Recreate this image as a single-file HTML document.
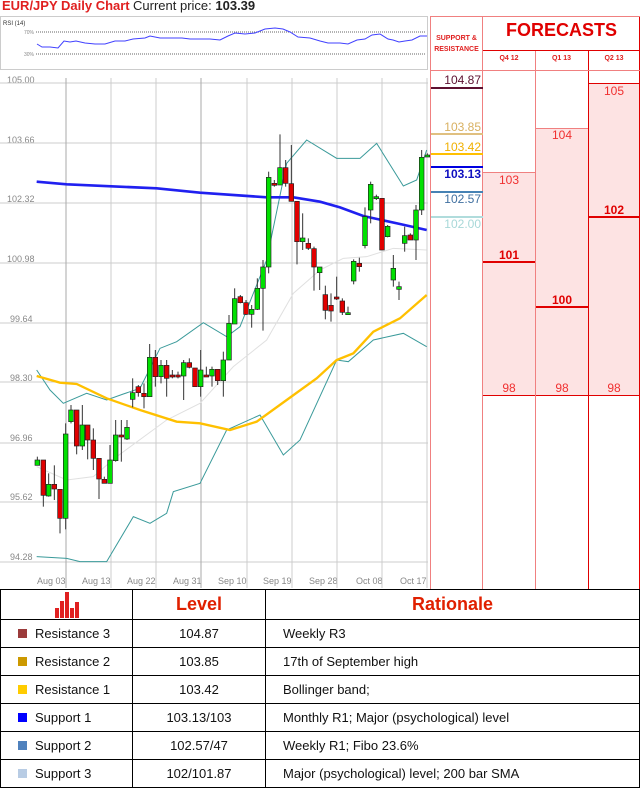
<!DOCTYPE html>
<html><head><meta charset="utf-8"><style>
*{margin:0;padding:0;box-sizing:border-box}
body{width:640px;height:786px;background:#fff;position:relative;overflow:hidden;font-family:"Liberation Sans",sans-serif}
.a{position:absolute}
.lbl{position:absolute;font-size:9px;color:#888;}
.fc{position:absolute;font-size:12px;color:#f03030;text-align:center}
table{position:absolute;left:0;top:589px;width:640px;height:197px;border-collapse:collapse}
td{border:1px solid #000;font-size:13px;color:#111;height:28px}
</style></head><body>
<div class="a" style="left:2px;top:-2px;font-size:13px;font-weight:bold;color:#e02020">EUR/JPY Daily Chart</div>
<div class="a" style="left:133px;top:-2px;font-size:13px;color:#222">Current price: <b>103.39</b></div>
<!-- RSI -->
<div class="a" style="left:0;top:16px;width:428px;height:54px;border:1px solid #ccc"></div>
<div class="a" style="left:3px;top:21px;font-size:6px;color:#333">RSI (14)</div>
<div class="a" style="left:24px;top:30px;font-size:5px;color:#888">70%</div>
<div class="a" style="left:24px;top:52px;font-size:5px;color:#888">30%</div>
<svg class="a" style="left:0;top:16px" width="428" height="54">
<line x1="36" y1="16" x2="425" y2="16" stroke="#666" stroke-dasharray="1,1"/>
<line x1="36" y1="38" x2="425" y2="38" stroke="#666" stroke-dasharray="1,1"/>
<polyline fill="none" stroke="#4040ff" stroke-width="1" points="37,28 42,31 50,31 58,32 64,25 70,26 76,25 85,27 95,28 105,28 115,25 125,25 133,23 145,22 150,20 160,22 172,22 182,22 190,23 200,23 210,23 220,24 228,20 235,17 245,18 255,17 265,13 275,12 283,13 290,16 298,21 310,22 320,25 328,27 340,27 348,28 357,24 365,23 372,19 380,18 388,23 393,24 399,26 405,25 412,24 420,20 427,20"/>
</svg>
<!-- Price axis labels -->
<div class="lbl" style="left:7px;top:75px">105.00</div>
<div class="lbl" style="left:7px;top:135px">103.66</div>
<div class="lbl" style="left:7px;top:194px">102.32</div>
<div class="lbl" style="left:7px;top:254px">100.98</div>
<div class="lbl" style="left:10px;top:314px">99.64</div>
<div class="lbl" style="left:10px;top:373px">98.30</div>
<div class="lbl" style="left:10px;top:433px">96.96</div>
<div class="lbl" style="left:10px;top:492px">95.62</div>
<div class="lbl" style="left:10px;top:552px">94.28</div>
<!-- dates -->
<div class="lbl" style="left:37px;top:576px">Aug 03</div>
<div class="lbl" style="left:82px;top:576px">Aug 13</div>
<div class="lbl" style="left:127px;top:576px">Aug 22</div>
<div class="lbl" style="left:173px;top:576px">Aug 31</div>
<div class="lbl" style="left:218px;top:576px">Sep 10</div>
<div class="lbl" style="left:263px;top:576px">Sep 19</div>
<div class="lbl" style="left:309px;top:576px">Sep 28</div>
<div class="lbl" style="left:356px;top:576px">Oct 08</div>
<div class="lbl" style="left:400px;top:576px">Oct 17</div>
<svg class="a" style="left:0;top:70px" width="430" height="520">
<g stroke="#ccc" stroke-width="1">
<line x1="0" y1="13" x2="428" y2="13"/><line x1="0" y1="73" x2="428" y2="73"/><line x1="0" y1="133" x2="428" y2="133"/><line x1="0" y1="193" x2="428" y2="193"/><line x1="0" y1="253" x2="428" y2="253"/><line x1="0" y1="312" x2="428" y2="312"/><line x1="0" y1="373" x2="428" y2="373"/><line x1="0" y1="432" x2="428" y2="432"/><line x1="0" y1="492" x2="428" y2="492"/>
<line x1="66" y1="8" x2="66" y2="518" stroke="#aaa"/><line x1="111" y1="8" x2="111" y2="518"/><line x1="156" y1="8" x2="156" y2="518"/><line x1="201" y1="8" x2="201" y2="518" stroke="#aaa"/><line x1="247" y1="8" x2="247" y2="518"/><line x1="292" y1="8" x2="292" y2="518"/><line x1="337" y1="8" x2="337" y2="518"/><line x1="382" y1="8" x2="382" y2="518"/><line x1="427" y1="8" x2="427" y2="518"/>
</g></svg>
<svg class="a" id="ch" style="left:0;top:120px" width="430" height="460" viewBox="0 0 1290 1380">
<polyline fill="none" stroke="#e0e0e0" stroke-width="3" points="110,1040 200,1080 280,1070 350,1010 500,900 600,850 700,740 800,660 880,520 960,450 1030,415 1100,410 1180,385 1280,390"/>
<polyline fill="none" stroke="#3a9a9a" stroke-width="3" points="110,750 150,810 190,850 260,820 320,840 370,822 420,805 480,685 530,665 610,608 680,650 720,620 800,420 860,130 920,60 1010,115 1080,115 1130,70 1210,198 1250,180 1280,90"/>
<polyline fill="none" stroke="#3a9a9a" stroke-width="3" points="110,1310 200,1315 240,1325 320,1325 400,1190 450,1210 500,1180 520,1115 600,1090 680,930 780,885 850,1005 900,960 1010,720 1045,725 1120,660 1210,640 1280,680"/>
<polyline fill="none" stroke="#ffc000" stroke-width="7" points="110,768 180,788 230,792 320,835 420,870 530,905 600,910 690,930 770,905 860,840 950,775 1010,720 1060,700 1120,635 1200,595 1280,525"/>
<polyline fill="none" stroke="#2020f0" stroke-width="8" points="110,185 200,193 470,205 600,218 800,232 880,232 960,245 1020,262 1090,288 1200,312 1280,330"/>
<g id="cd"></g>
</svg>
<script>
var d=[[112,1020,1036,1010,1036,1],[130,1020,1126,1020,1160,0],[146,1093,1128,1060,1130,1],[163,1093,1107,1036,1140,0],[180,1108,1195,1108,1240,0],[197,942,1195,910,1228,1],[213,870,905,855,910,1],[230,870,978,870,1003,0],[247,915,978,855,990,1],[263,915,960,915,1018,0],[280,960,1015,925,1050,0],[297,1015,1077,1015,1137,0],[313,1078,1090,1070,1090,0],[330,1020,1090,975,1090,1],[347,945,1022,900,1025,1],[364,945,950,900,1025,0],[381,922,957,900,960,1],[398,818,838,775,862,1],[415,800,818,795,830,0],[432,820,830,790,865,0],[449,712,830,672,830,1],[466,712,770,690,800,0],[483,736,770,720,790,1],[500,736,775,720,830,0],[517,765,767,750,775,0],[534,765,767,755,775,0],[551,728,768,720,840,1],[568,728,742,715,745,0],[585,744,800,744,800,0],[602,750,800,690,830,1],[619,765,768,740,770,0],[636,748,768,740,800,1],[653,748,782,748,795,0],[670,720,782,695,830,1],[687,610,720,585,720,1],[704,536,612,505,612,1],[721,530,548,525,550,0],[738,548,583,540,585,0],[755,568,583,555,623,1],[772,505,568,475,570,1],[789,441,505,420,632,1],[806,172,441,155,460,1],[823,190,195,180,200,0],[840,143,195,43,195,1],[857,143,190,120,200,0],[874,191,244,75,244,0],[891,244,365,244,433,0],[908,354,365,280,390,1],[925,370,385,355,390,0],[942,386,441,380,512,0],[959,441,458,441,510,1],[976,524,571,497,598,0],[993,556,573,520,605,0],[1010,531,535,470,540,0],[1027,543,577,535,585,0],[1044,578,582,560,585,1],[1061,424,483,418,493,1],[1078,430,440,413,455,0],[1095,290,377,262,385,1],[1112,193,270,185,310,1],[1129,230,236,224,240,1],[1146,235,390,235,390,0],[1163,319,350,315,352,1],[1180,445,480,405,500,1],[1197,500,508,485,540,1],[1214,347,370,320,395,1],[1231,345,360,340,360,0],[1248,270,360,255,420,1],[1265,112,270,90,285,1],[1282,105,110,100,110,1]];
var s='';d.forEach(function(c){s+='<line x1="'+c[0]+'" x2="'+c[0]+'" y1="'+c[3]+'" y2="'+c[4]+'" stroke="#333" stroke-width="3"/>';var h=Math.max(c[2]-c[1],6);s+='<rect x="'+(c[0]-7)+'" y="'+c[1]+'" width="14" height="'+h+'" fill="'+(c[5]?'#00e000':'#e00000')+'" stroke="#222" stroke-width="2"/>';});
document.getElementById('cd').innerHTML=s;
</script>
<!-- right panel -->
<div class="a" style="left:430px;top:16px;width:210px;height:573px;border-left:1px solid #f08080"></div>
<div class="a" style="left:482px;top:16px;width:1px;height:573px;background:#f08080"></div>
<div class="a" style="left:535px;top:50px;width:1px;height:539px;background:#f08080"></div>
<div class="a" style="left:588px;top:50px;width:1px;height:539px;background:#e00000"></div>
<div class="a" style="left:639px;top:16px;width:1px;height:573px;background:#e00000"></div>
<div class="a" style="left:430px;top:16px;width:210px;height:1px;background:#f08080"></div>
<div class="a" style="left:483px;top:50px;width:157px;height:1px;background:#e00000"></div>
<div class="a" style="left:430px;top:70px;width:210px;height:1px;background:#f08080"></div>
<div class="a" style="left:430px;top:33px;width:53px;text-align:center;font-size:7px;font-weight:bold;color:#e02020;line-height:11px">SUPPORT &amp;<br>RESISTANCE</div>
<div class="a" style="left:483px;top:20px;width:157px;text-align:center;font-size:18px;font-weight:bold;color:#e00000">FORECASTS</div>
<div class="a" style="left:483px;top:55px;width:52px;text-align:center;font-size:7px;font-weight:bold;color:#e02020">Q4 12</div>
<div class="a" style="left:535px;top:55px;width:53px;text-align:center;font-size:7px;font-weight:bold;color:#e02020">Q1 13</div>
<div class="a" style="left:588px;top:55px;width:52px;text-align:center;font-size:7px;font-weight:bold;color:#e02020">Q2 13</div>
<!-- S&R levels -->
<div class="a" style="left:431px;top:87px;width:52px;height:2px;background:#5c1030"></div>
<div class="a" style="left:431px;top:73px;width:50px;text-align:right;font-size:12px;color:#5c1030">104.87</div>
<div class="a" style="left:431px;top:133px;width:52px;height:2px;background:#e0c080"></div>
<div class="a" style="left:431px;top:120px;width:50px;text-align:right;font-size:12px;color:#d8b060">103.85</div>
<div class="a" style="left:431px;top:153px;width:52px;height:2px;background:#ffc000"></div>
<div class="a" style="left:431px;top:140px;width:50px;text-align:right;font-size:12px;color:#f0b000">103.42</div>
<div class="a" style="left:431px;top:166px;width:52px;height:2px;background:#0000e0"></div>
<div class="a" style="left:431px;top:167px;width:50px;text-align:right;font-size:12px;font-weight:bold;color:#1010c0">103.13</div>
<div class="a" style="left:431px;top:191px;width:52px;height:2px;background:#4682b4"></div>
<div class="a" style="left:431px;top:192px;width:50px;text-align:right;font-size:12px;color:#4070a0">102.57</div>
<div class="a" style="left:431px;top:216px;width:52px;height:2px;background:#b0dcdc"></div>
<div class="a" style="left:431px;top:217px;width:50px;text-align:right;font-size:12px;color:#a8d8d8">102.00</div>
<!-- forecast boxes -->
<div class="a" style="left:483px;top:172px;width:52px;height:224px;background:#fde3e3;border-top:1px solid #f08080;border-bottom:1px solid #e00000"></div>
<div class="a" style="left:536px;top:128px;width:52px;height:268px;background:#fde3e3;border-top:1px solid #f08080;border-bottom:1px solid #e00000"></div>
<div class="a" style="left:589px;top:83px;width:50px;height:313px;background:#fde3e3;border-top:1px solid #e00000;border-bottom:1px solid #e00000"></div>
<div class="a" style="left:483px;top:261px;width:52px;height:2px;background:#e00000"></div>
<div class="a" style="left:536px;top:306px;width:52px;height:2px;background:#e00000"></div>
<div class="a" style="left:589px;top:216px;width:50px;height:2px;background:#e00000"></div>
<div class="fc" style="left:483px;top:173px;width:52px">103</div>
<div class="fc" style="left:483px;top:248px;width:52px;font-weight:bold;color:#e00000">101</div>
<div class="fc" style="left:483px;top:381px;width:52px">98</div>
<div class="fc" style="left:536px;top:128px;width:52px">104</div>
<div class="fc" style="left:536px;top:293px;width:52px;font-weight:bold;color:#e00000">100</div>
<div class="fc" style="left:536px;top:381px;width:52px">98</div>
<div class="fc" style="left:589px;top:84px;width:50px">105</div>
<div class="fc" style="left:589px;top:203px;width:50px;font-weight:bold;color:#e00000">102</div>
<div class="fc" style="left:589px;top:381px;width:50px">98</div>
<!-- table -->
<table>
<tr style="height:30px"><td style="width:132px;position:relative"><svg style="position:absolute;left:53px;top:2px" width="28" height="27"><g fill="#e02020"><rect x="1" y="16" width="4" height="10"/><rect x="6" y="9" width="4" height="17"/><rect x="11" y="0" width="4" height="26"/><rect x="16" y="16" width="4" height="10"/><rect x="21" y="10" width="4" height="16"/></g></svg></td><td style="width:133px;text-align:center;font-size:18px;font-weight:bold;color:#e02000">Level</td><td style="text-align:center;font-size:18px;font-weight:bold;color:#e02000">Rationale</td></tr>
<tr><td style="padding-left:17px"><span style="display:inline-block;width:9px;height:9px;background:#9b3b3b;margin-right:8px"></span>Resistance 3</td><td style="text-align:center">104.87</td><td style="padding-left:17px">Weekly R3</td></tr>
<tr><td style="padding-left:17px"><span style="display:inline-block;width:9px;height:9px;background:#cc9900;margin-right:8px"></span>Resistance 2</td><td style="text-align:center">103.85</td><td style="padding-left:17px">17th of September high</td></tr>
<tr><td style="padding-left:17px"><span style="display:inline-block;width:9px;height:9px;background:#ffcc00;margin-right:8px"></span>Resistance 1</td><td style="text-align:center">103.42</td><td style="padding-left:17px">Bollinger band;</td></tr>
<tr><td style="padding-left:17px"><span style="display:inline-block;width:9px;height:9px;background:#0000ff;margin-right:8px"></span>Support 1</td><td style="text-align:center">103.13/103</td><td style="padding-left:17px">Monthly R1; Major (psychological) level</td></tr>
<tr><td style="padding-left:17px"><span style="display:inline-block;width:9px;height:9px;background:#4f81bd;margin-right:8px"></span>Support 2</td><td style="text-align:center">102.57/47</td><td style="padding-left:17px">Weekly R1; Fibo 23.6%</td></tr>
<tr><td style="padding-left:17px"><span style="display:inline-block;width:9px;height:9px;background:#b8cce4;margin-right:8px"></span>Support 3</td><td style="text-align:center">102/101.87</td><td style="padding-left:17px">Major (psychological) level; 200 bar SMA</td></tr>
</table>
</body></html>
